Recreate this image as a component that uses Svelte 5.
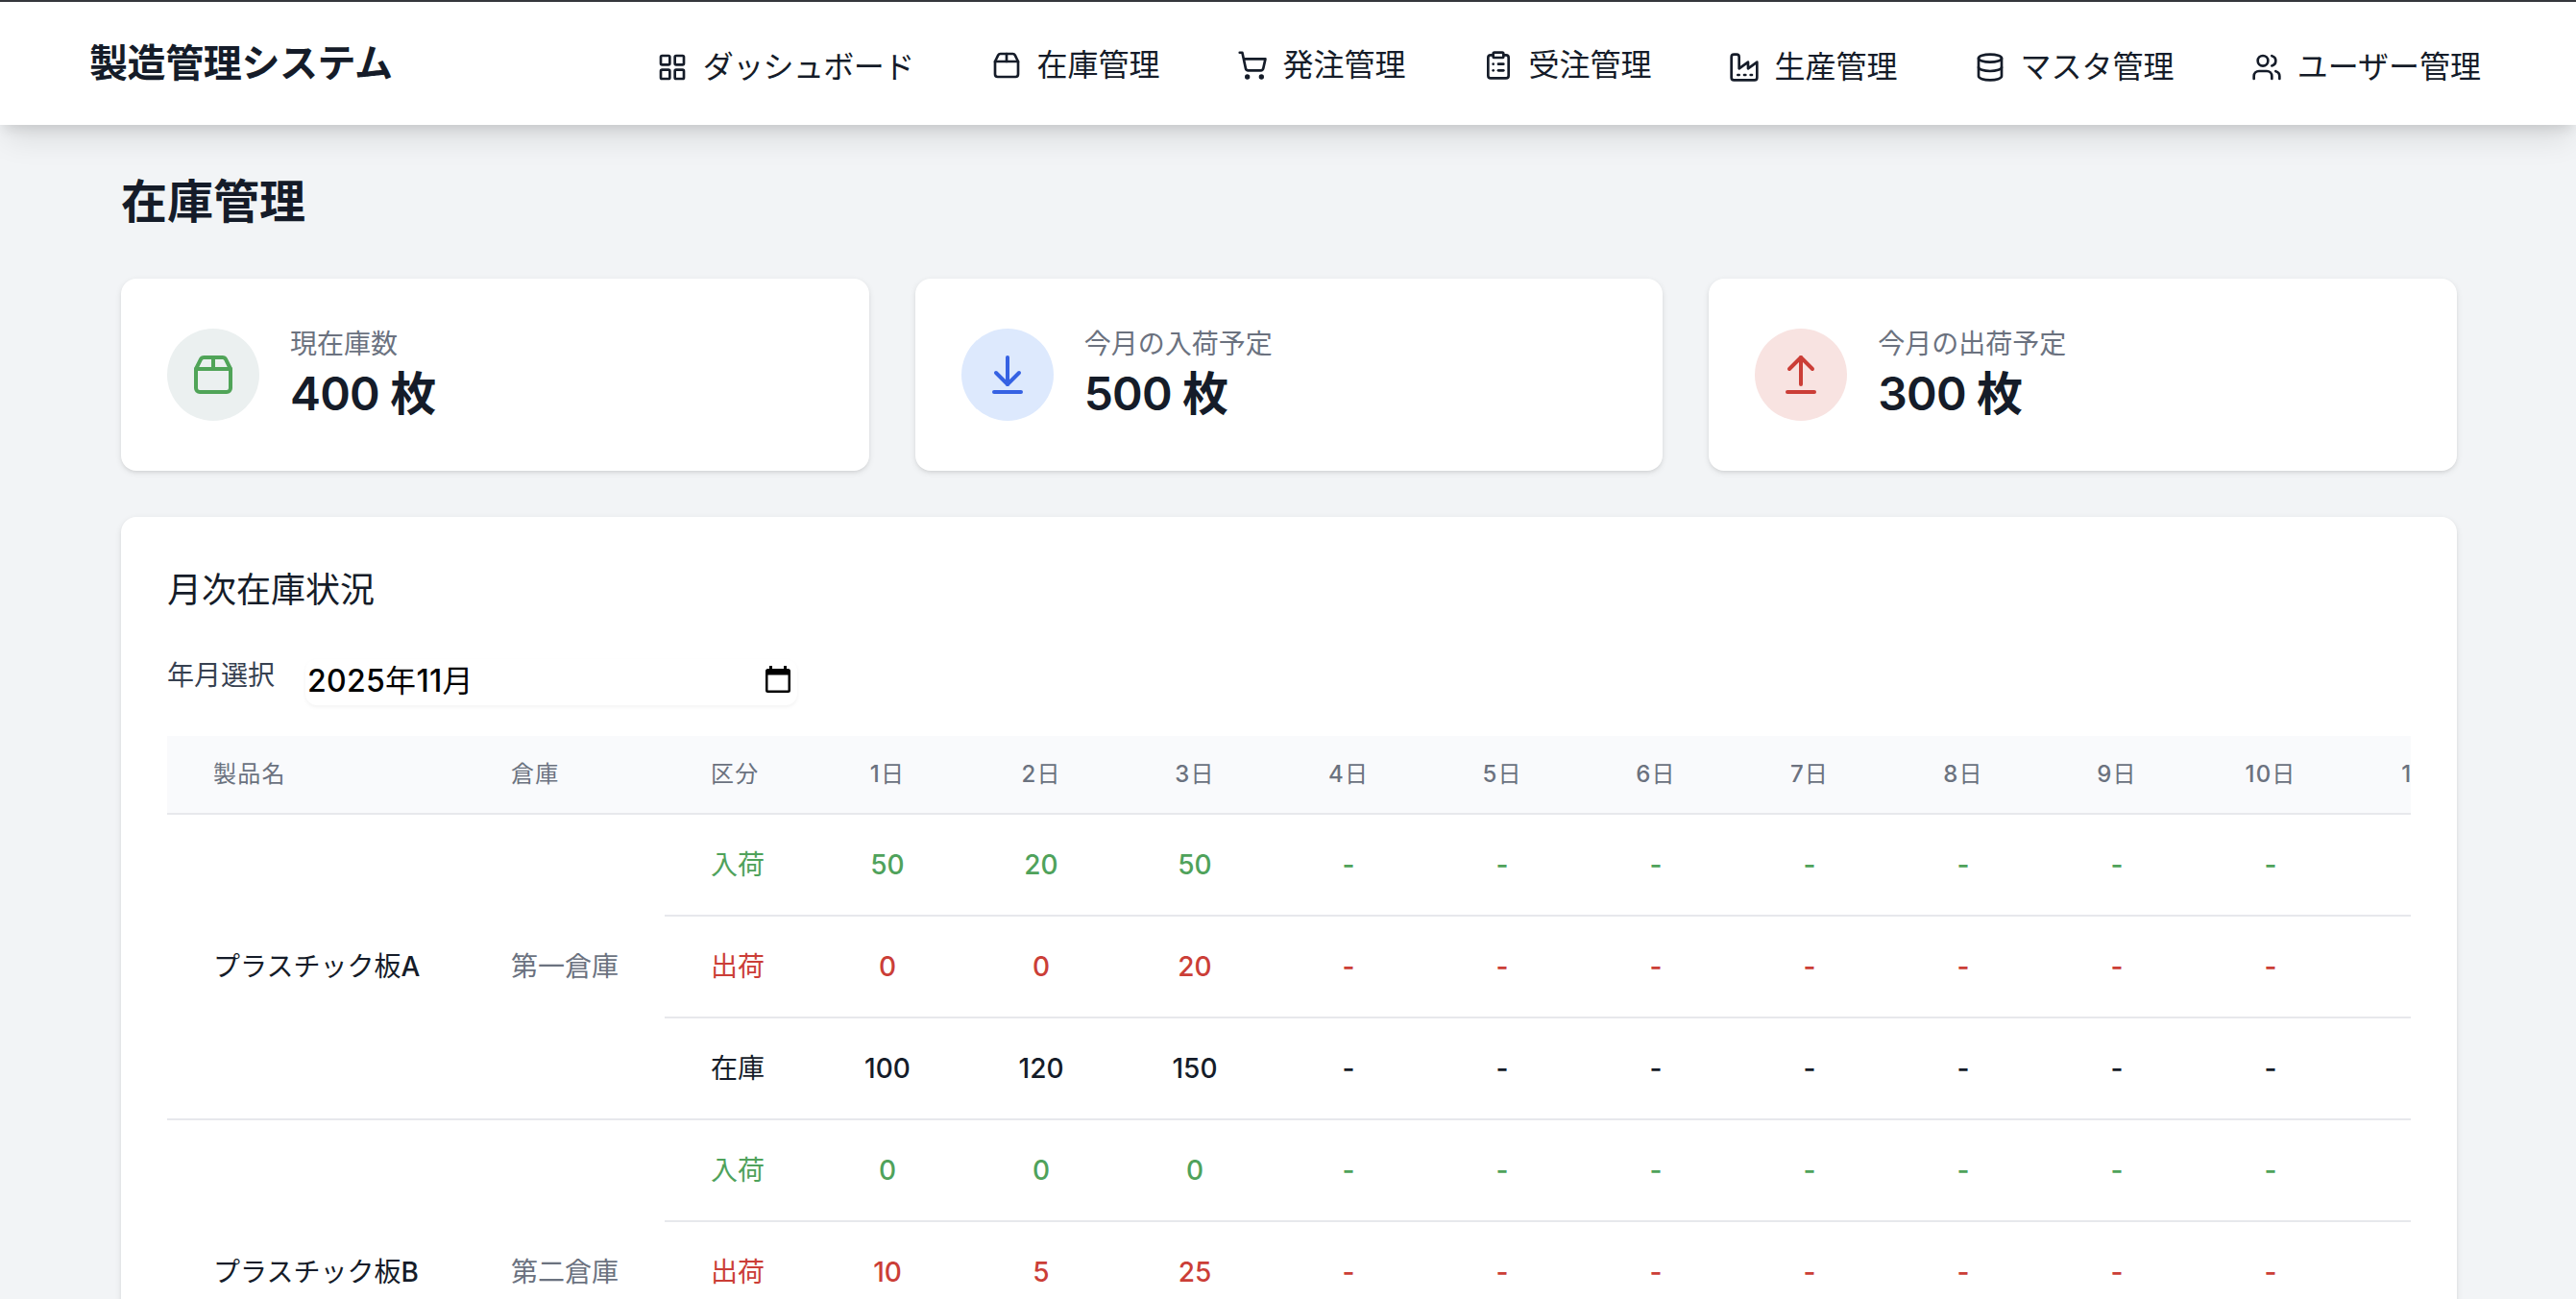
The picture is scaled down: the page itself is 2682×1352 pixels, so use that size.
<script lang="ts">
	const nav = [
		{ label: 'ダッシュボード', icon: 'grid', low: true },
		{ label: '在庫管理', icon: 'package', low: false },
		{ label: '発注管理', icon: 'cart', low: false },
		{ label: '受注管理', icon: 'clipboard', low: false },
		{ label: '生産管理', icon: 'factory', low: true },
		{ label: 'マスタ管理', icon: 'database', low: true },
		{ label: 'ユーザー管理', icon: 'users', low: true }
	];

	const summaries = [
		{ label: '現在庫数', value: 400, icon: 'package', tone: 'green' },
		{ label: '今月の入荷予定', value: 500, icon: 'down', tone: 'blue' },
		{ label: '今月の出荷予定', value: 300, icon: 'up', tone: 'red' }
	];

	const icons: Record<string, string[]> = {
		grid: [
			'M4 3h5a1 1 0 0 1 1 1v5a1 1 0 0 1-1 1H4a1 1 0 0 1-1-1V4a1 1 0 0 1 1-1Z',
			'M15 3h5a1 1 0 0 1 1 1v5a1 1 0 0 1-1 1h-5a1 1 0 0 1-1-1V4a1 1 0 0 1 1-1Z',
			'M15 14h5a1 1 0 0 1 1 1v5a1 1 0 0 1-1 1h-5a1 1 0 0 1-1-1v-5a1 1 0 0 1 1-1Z',
			'M4 14h5a1 1 0 0 1 1 1v5a1 1 0 0 1-1 1H4a1 1 0 0 1-1-1v-5a1 1 0 0 1 1-1Z'
		],
		package: [
			'M3 9h18v10a2 2 0 0 1-2 2H5a2 2 0 0 1-2-2V9Z',
			'm3 9 2.45-4.9A2 2 0 0 1 7.24 3h9.52a2 2 0 0 1 1.8 1.1L21 9',
			'M12 3v6'
		],
		cart: [
			'M7 21a1 1 0 1 0 2 0a1 1 0 1 0-2 0',
			'M18 21a1 1 0 1 0 2 0a1 1 0 1 0-2 0',
			'M2.05 2.05h2l2.66 12.42a2 2 0 0 0 2 1.58h9.78a2 2 0 0 0 1.95-1.57l1.65-7.43H5.12'
		],
		clipboard: [
			'M9 2h6a1 1 0 0 1 1 1v2a1 1 0 0 1-1 1H9a1 1 0 0 1-1-1V3a1 1 0 0 1 1-1Z',
			'M16 4h2a2 2 0 0 1 2 2v14a2 2 0 0 1-2 2H6a2 2 0 0 1-2-2V6a2 2 0 0 1 2-2h2',
			'M12 11h4',
			'M12 16h4',
			'M8 11h.01',
			'M8 16h.01'
		],
		factory: [
			'M2 20a2 2 0 0 0 2 2h16a2 2 0 0 0 2-2V8l-7 5V8l-7 5V4a2 2 0 0 0-2-2H4a2 2 0 0 0-2 2Z',
			'M17 18h1',
			'M12 18h1',
			'M7 18h1'
		],
		database: [
			'M3 5a9 3 0 1 0 18 0a9 3 0 1 0-18 0',
			'M3 5v14a9 3 0 0 0 18 0V5',
			'M3 12a9 3 0 0 0 18 0'
		],
		users: [
			'M16 21v-2a4 4 0 0 0-4-4H6a4 4 0 0 0-4 4v2',
			'M5 7a4 4 0 1 0 8 0a4 4 0 1 0-8 0',
			'M22 21v-2a4 4 0 0 0-3-3.87',
			'M16 3.13a4 4 0 0 1 0 7.75'
		],
		down: ['M12 17V3', 'm6 11 6 6 6-6', 'M19 21H5'],
		up: ['m18 9-6-6-6 6', 'M12 3v14', 'M5 21h14']
	};

	const days = Array.from({ length: 11 }, (_, i) => i + 1);

	const products = [
		{
			name: 'プラスチック板',
			grade: 'A',
			warehouse: '第一倉庫',
			rows: [
				{ kind: '入荷', tone: 'in', values: [50, 20, 50] },
				{ kind: '出荷', tone: 'out', values: [0, 0, 20] },
				{ kind: '在庫', tone: 'stock', values: [100, 120, 150] }
			]
		},
		{
			name: 'プラスチック板',
			grade: 'B',
			warehouse: '第二倉庫',
			rows: [
				{ kind: '入荷', tone: 'in', values: [0, 0, 0] },
				{ kind: '出荷', tone: 'out', values: [10, 5, 25] },
				{ kind: '在庫', tone: 'stock', values: [] }
			]
		}
	];
</script>

{#snippet icon(name: string)}
	<svg class="icon" viewBox="0 0 24 24" aria-hidden="true">
		{#each icons[name] as d}
			<path {d} />
		{/each}
	</svg>
{/snippet}

<div class="page">
	<header>
		<div class="brand">製造管理システム</div>
		<nav>
			{#each nav as item}
				<a href="#{item.icon}" class={item.icon} class:low={item.low}>
					{@render icon(item.icon)}
					<span>{item.label}</span>
				</a>
			{/each}
		</nav>
	</header>

	<main>
		<h1>在庫管理</h1>

		<div class="summaries">
			{#each summaries as s}
				<div class="card summary">
					<div class="badge {s.tone}">{@render icon(s.icon)}</div>
					<div>
						<p class="caption">{s.label}</p>
						<p class="amount">{s.value} 枚</p>
					</div>
				</div>
			{/each}
		</div>

		<section class="card monthly">
			<h2>月次在庫状況</h2>
			<div class="picker">
				<span class="picker-label">年月選択</span>
				<div class="month">
					<span><b>2025</b>年<b>11</b>月</span>
					<svg class="calendar" viewBox="0 0 26 28" aria-hidden="true">
						<path
							fill-rule="evenodd"
							d="M4 0h3v3h12V0h3v3h1.5a2.5 2.5 0 0 1 2.5 2.5v20a2.5 2.5 0 0 1-2.5 2.5h-21A2.5 2.5 0 0 1 0 25.5v-20A2.5 2.5 0 0 1 2.5 3H4ZM2.5 9.5v16h21v-16Z"
						/>
					</svg>
				</div>
			</div>

			<div class="scroll">
				<table>
					<thead>
						<tr>
							<th class="name">製品名</th>
							<th class="warehouse">倉庫</th>
							<th class="kind">区分</th>
							{#each days as day}
								<th class="day"><b>{day}</b>日</th>
							{/each}
						</tr>
					</thead>
					<tbody>
						{#each products as product}
							{#each product.rows as row, i}
								<tr class={row.tone}>
									{#if i === 0}
										<td class="name" rowspan="3">{product.name}<b>{product.grade}</b></td>
										<td class="warehouse" rowspan="3">{product.warehouse}</td>
									{/if}
									<td class="kind">{row.kind}</td>
									{#each days as day}
										<td class="day">{day > 10 ? '' : (row.values[day - 1] ?? '-')}</td>
									{/each}
								</tr>
							{/each}
						{/each}
					</tbody>
				</table>
			</div>
		</section>
	</main>
</div>

<style>
	:global(body) {
		background: #f2f4f6;
	}
	.page {
		height: 1352px;
		overflow: hidden;
		box-sizing: border-box;
		border-top: 2px solid #35373c;
		background: #f2f4f6;
		color: #151c29;
		font-family: Inter, 'Noto Sans CJK JP', sans-serif;
	}
	header {
		position: relative;
		height: 128px;
		box-sizing: border-box;
		display: flex;
		align-items: center;
		justify-content: space-between;
		padding: 0 99px 0 93px;
		background: #fff;
		box-shadow:
			0 20px 30px -6px rgba(0, 0, 0, 0.1),
			0 8px 12px -4px rgba(0, 0, 0, 0.1);
	}
	.brand {
		font-size: 40px;
		font-weight: 700;
		line-height: 56px;
		letter-spacing: -0.4px;
	}
	nav {
		display: flex;
		gap: 80px;
	}
	nav a {
		display: flex;
		align-items: center;
		gap: 16px;
		height: 48px;
		margin-top: 6px;
		color: inherit;
		font-size: 32px;
		line-height: 48px;
		text-decoration: none;
		white-space: nowrap;
	}
	nav a.low {
		margin-top: 8px;
	}
	nav a.grid {
		letter-spacing: -0.6px;
	}
	.icon {
		display: block;
		width: 32px;
		height: 32px;
		fill: none;
		stroke: currentColor;
		stroke-width: 2;
		stroke-linecap: round;
		stroke-linejoin: round;
	}
	main {
		padding: 48px 124px 0 126px;
	}
	h1 {
		margin: 0 0 48px;
		font-size: 48px;
		font-weight: 700;
		line-height: 64px;
	}
	p {
		margin: 0;
	}
	b {
		font-weight: 500;
	}
	.card {
		background: #fff;
		border-radius: 16px;
		box-shadow:
			0 2px 6px rgba(0, 0, 0, 0.1),
			0 2px 4px -2px rgba(0, 0, 0, 0.1);
	}
	.summaries {
		display: grid;
		grid-template-columns: repeat(3, 1fr);
		gap: 48px;
	}
	.summary {
		display: flex;
		align-items: center;
		gap: 32px;
		padding: 48px;
	}
	.badge {
		display: grid;
		place-items: center;
		width: 96px;
		height: 96px;
		border-radius: 50%;
	}
	.badge .icon {
		width: 48px;
		height: 48px;
	}
	.green {
		background: #ebf0f0;
		color: #50a458;
	}
	.blue {
		background: #dde9fd;
		color: #3662e3;
	}
	.red {
		background: #f8e3e1;
		color: #cb3e37;
	}
	.caption {
		color: #6b727f;
		font-size: 28px;
		line-height: 40px;
	}
	.amount {
		font-size: 48px;
		font-weight: 600;
		line-height: 64px;
		letter-spacing: -0.8px;
	}
	.monthly {
		height: 1000px;
		box-sizing: border-box;
		margin-top: 48px;
		padding: 48px;
	}
	h2 {
		margin: 0 0 44px;
		font-size: 36px;
		font-weight: 400;
		line-height: 56px;
	}
	.picker {
		display: flex;
		align-items: flex-start;
		gap: 32px;
		height: 80px;
	}
	.picker-label {
		margin-top: -3px;
		color: #374151;
		font-size: 28px;
		line-height: 40px;
	}
	.month {
		display: flex;
		align-items: center;
		justify-content: space-between;
		width: 512px;
		height: 48px;
		box-sizing: border-box;
		padding: 0 7px 8px 2px;
		border-radius: 12px;
		box-shadow: 0 2px 4px rgba(0, 0, 0, 0.05);
		color: #000;
		font-size: 32px;
		letter-spacing: 0.3px;
	}
	.month b {
		font-weight: 450;
	}
	.calendar {
		width: 26px;
		height: 28px;
		margin-top: 2px;
	}
	.scroll {
		overflow: hidden;
	}
	table {
		width: 2430px;
		table-layout: fixed;
		border-collapse: separate;
		border-spacing: 0;
		font-size: 28px;
		line-height: 40px;
	}
	th,
	td {
		box-sizing: border-box;
		padding: 0 48px;
		border-bottom: 2px solid #e7e8ec;
		text-align: left;
		white-space: nowrap;
	}
	th {
		height: 82px;
		background: #f9fafc;
		color: #6b727f;
		font-size: 24px;
		font-weight: 400;
		line-height: 32px;
		letter-spacing: 1.2px;
	}
	td {
		height: 106px;
	}
	th.name {
		width: 310px;
	}
	th.warehouse {
		width: 208px;
	}
	th.kind {
		width: 152px;
	}
	.day {
		width: 160px;
		padding: 0;
		text-align: center;
	}
	td.day {
		font-weight: 450;
	}
	td.name {
		color: #151c29;
	}
	td.warehouse {
		color: #6b727f;
	}
	.in {
		color: #4fa25b;
	}
	.out {
		color: #cb3e37;
	}
	.stock td.day {
		font-weight: 550;
	}
</style>
